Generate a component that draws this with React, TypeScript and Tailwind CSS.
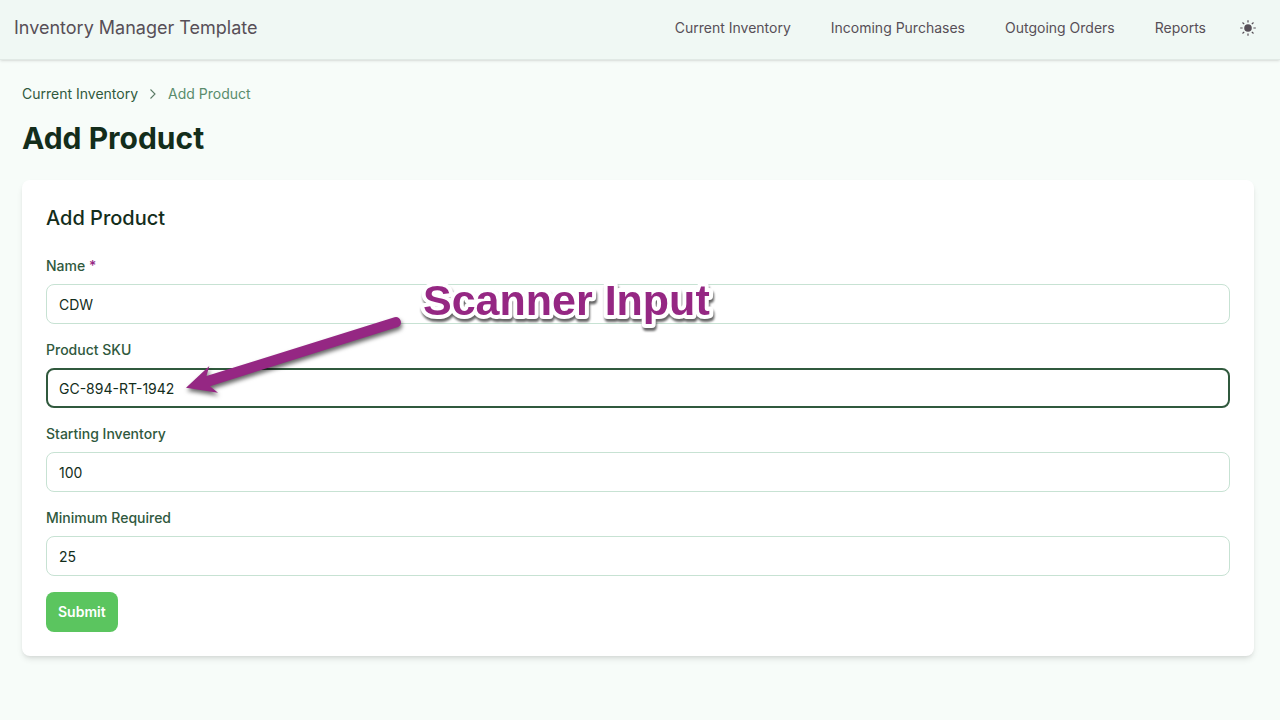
import React from 'react'

const NAV_LINKS = ['Current Inventory', 'Incoming Purchases', 'Outgoing Orders', 'Reports']

interface FieldProps {
  id: string
  label: string
  value: string
  required?: boolean
  active?: boolean
}

function SunIcon() {
  return (
    <svg className="w-4 h-4" viewBox="0 0 16 16" fill="none" stroke="currentColor" strokeWidth="1.2" aria-hidden="true">
      <circle cx="8" cy="8" r="3.8" fill="currentColor" stroke="none" />
      <path d="M8 .2v2.4M8 13.4v2.4M.2 8h2.4M13.4 8h2.4M2.5 2.5l1.7 1.7M11.8 11.8l1.7 1.7M2.5 13.5l1.7-1.7M11.8 4.2l1.7-1.7" />
    </svg>
  )
}

function Header() {
  return (
    <header className="flex h-[60px] items-center justify-between border-b border-[#e1e9e5] bg-[#f0f8f4] pb-1 pl-3.5 pr-6 text-[#574f57] shadow-sm">
      <a href="#" className="text-lg">Inventory Manager Template</a>
      <nav className="flex items-center gap-10 text-sm">
        {NAV_LINKS.map((link) => (
          <a key={link} href="#">{link}</a>
        ))}
        <button type="button" aria-label="Toggle theme" className="-ml-1.5">
          <SunIcon />
        </button>
      </nav>
    </header>
  )
}

function Field({ id, label, value, required, active }: FieldProps) {
  return (
    <div className="flex flex-col gap-2">
      <label htmlFor={id} className="text-sm font-medium text-[#30593d]">
        {label}
        {required && <span className="text-[#952783]"> *</span>}
      </label>
      <input
        id={id}
        type="text"
        defaultValue={value}
        required={required}
        className={
          active
            ? 'h-10 w-full rounded-lg border-2 border-[#30593d] bg-white px-[11px] text-sm text-[#132d1b] outline-none'
            : 'h-10 w-full rounded-lg border border-[#c7e2d3] bg-white px-3 text-sm text-[#132d1b] outline-none'
        }
      />
    </div>
  )
}

// Callout drawn over the form, pointing at the SKU field
function ScannerCallout() {
  return (
    <div className="pointer-events-none absolute left-40 top-24 flex">
      <svg className="h-[130px] w-[230px]" viewBox="0 0 230 130">
        <path
          className="drop-shadow-[1px_3px_2px_rgba(0,0,0,0.6)]"
          fill="#952783"
          d="M4 111.7 27.3 90 24.5 100 212.5 41.2A5.2 5.2 0 0 1 215.8 51L28 110.2 36 116.7Z"
        />
      </svg>
      <svg
        className="h-[70px] w-[310px] font-['Liberation_Sans',Arial,sans-serif] text-[43px] font-bold"
        viewBox="0 0 310 70"
      >
        <text
          x="11"
          y="39"
          className="drop-shadow-[1px_3px_1px_rgba(0,0,0,0.6)]"
          fill="#952783"
          stroke="#ffffff"
          strokeWidth="8"
          strokeLinejoin="round"
          paintOrder="stroke"
        >
          Scanner Input
        </text>
      </svg>
    </div>
  )
}

export default function App() {
  return (
    <div className="min-h-screen bg-[#f7fcf9] font-['Inter',sans-serif]">
      <Header />
      <main className="pb-16 pl-[22px] pr-[26px] pt-6">
        <nav aria-label="Breadcrumb" className="flex items-center gap-2 text-sm">
          <a href="#" className="text-[#30593d]">Current Inventory</a>
          <svg className="h-3.5 w-3.5 text-[#5b7a66]" viewBox="0 0 14 14" fill="none" stroke="currentColor" strokeWidth="1.1" aria-hidden="true">
            <path d="M4.5 2.5 9 7l-4.5 4.5" />
          </svg>
          <span className="text-[#5a8c6c]">Add Product</span>
        </nav>
        <h1 className="mt-3.5 text-3xl leading-10 font-bold text-[#132d1b]">Add Product</h1>
        <section className="relative mt-[22px] rounded-lg bg-white p-6 shadow-md">
          <h2 className="text-xl font-medium text-[#132d1b]">Add Product</h2>
          <form className="mt-6 flex flex-col gap-4">
            <Field id="name" label="Name" value="CDW" required />
            <Field id="sku" label="Product SKU" value="GC-894-RT-1942" active />
            <Field id="starting" label="Starting Inventory" value="100" />
            <Field id="minimum" label="Minimum Required" value="25" />
            <button type="button" className="h-10 self-start rounded-lg bg-[#5bc55f] px-3 text-sm font-semibold text-white">
              Submit
            </button>
          </form>
          <ScannerCallout />
        </section>
      </main>
    </div>
  )
}
